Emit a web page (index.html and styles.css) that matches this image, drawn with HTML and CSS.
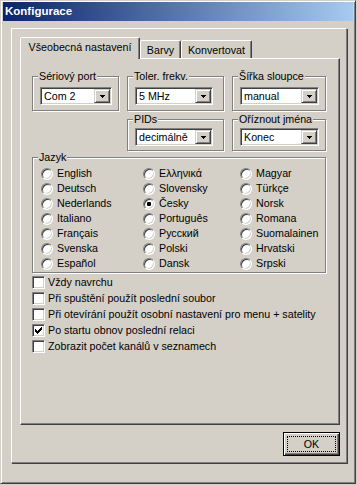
FILE: index.html
```html
<!DOCTYPE html>
<html lang="cs">
<head>
<meta charset="utf-8">
<title>Konfigurace</title>
<link rel="stylesheet" href="styles.css">
</head>
<body>
<div class="window">
  <div class="titlebar">Konfigurace</div>
  <div class="panel">
    <div class="tabs">
      <div class="tab tab-active">Všeobecná nastavení</div>
      <div class="tab tab-barvy">Barvy</div>
      <div class="tab tab-konv">Konvertovat</div>
    </div>
    <div class="page">
      <div class="top-grid">
        <div class="group">
          <span class="legend">Sériový port</span>
          <div class="combo w72"><span class="combo-text">Com 2</span><span class="combo-btn"><svg width="5" height="3" viewBox="0 0 5 3"><path d="M0 0h5v1H0zM1 1h3v1H1zM2 2h1v1H2z"/></svg></span></div>
        </div>
        <div class="group">
          <span class="legend">Toler. frekv.</span>
          <div class="combo w78"><span class="combo-text">5 MHz</span><span class="combo-btn"><svg width="5" height="3" viewBox="0 0 5 3"><path d="M0 0h5v1H0zM1 1h3v1H1zM2 2h1v1H2z"/></svg></span></div>
        </div>
        <div class="group">
          <span class="legend">Šířka sloupce</span>
          <div class="combo w79"><span class="combo-text">manual</span><span class="combo-btn"><svg width="5" height="3" viewBox="0 0 5 3"><path d="M0 0h5v1H0zM1 1h3v1H1zM2 2h1v1H2z"/></svg></span></div>
        </div>
        <div class="group r2 col2">
          <span class="legend">PIDs</span>
          <div class="combo w78"><span class="combo-text">decimálně</span><span class="combo-btn"><svg width="5" height="3" viewBox="0 0 5 3"><path d="M0 0h5v1H0zM1 1h3v1H1zM2 2h1v1H2z"/></svg></span></div>
        </div>
        <div class="group r2 col3">
          <span class="legend">Oříznout jména</span>
          <div class="combo w79"><span class="combo-text">Konec</span><span class="combo-btn"><svg width="5" height="3" viewBox="0 0 5 3"><path d="M0 0h5v1H0zM1 1h3v1H1zM2 2h1v1H2z"/></svg></span></div>
        </div>
      </div>

      <div class="group jazyk">
        <span class="legend">Jazyk</span>
        <div class="radios">
          <div class="radio-item"><span class="radio"></span>English</div>
          <div class="radio-item"><span class="radio"></span>Deutsch</div>
          <div class="radio-item"><span class="radio"></span>Nederlands</div>
          <div class="radio-item"><span class="radio"></span>Italiano</div>
          <div class="radio-item"><span class="radio"></span>Français</div>
          <div class="radio-item"><span class="radio"></span>Svenska</div>
          <div class="radio-item"><span class="radio"></span>Español</div>
          <div class="radio-item"><span class="radio"></span>Ελληνικά</div>
          <div class="radio-item"><span class="radio"></span>Slovensky</div>
          <div class="radio-item"><span class="radio checked"><span class="dot"></span></span>Česky</div>
          <div class="radio-item"><span class="radio"></span>Português</div>
          <div class="radio-item"><span class="radio"></span>Русский</div>
          <div class="radio-item"><span class="radio"></span>Polski</div>
          <div class="radio-item"><span class="radio"></span>Dansk</div>
          <div class="radio-item"><span class="radio"></span>Magyar</div>
          <div class="radio-item"><span class="radio"></span>Türkçe</div>
          <div class="radio-item"><span class="radio"></span>Norsk</div>
          <div class="radio-item"><span class="radio"></span>Romana</div>
          <div class="radio-item"><span class="radio"></span>Suomalainen</div>
          <div class="radio-item"><span class="radio"></span>Hrvatski</div>
          <div class="radio-item"><span class="radio"></span>Srpski</div>
        </div>
      </div>

      <div class="checks">
        <div class="check-item"><span class="checkbox"></span>Vždy navrchu</div>
        <div class="check-item"><span class="checkbox"></span>Při spuštění použít poslední soubor</div>
        <div class="check-item"><span class="checkbox"></span>Při otevírání použít osobní nastavení pro menu + satelity</div>
        <div class="check-item"><span class="checkbox"><svg width="11" height="11" viewBox="0 0 11 11"><path d="M2 4h1v3H2zM3 5h1v3H3zM4 6h1v3H4zM5 5h1v3H5zM6 4h1v3H6zM7 3h1v3H7zM8 2h1v3H8z"/></svg></span>Po startu obnov poslední relaci</div>
        <div class="check-item"><span class="checkbox"></span>Zobrazit počet kanálů v seznamech</div>
      </div>
    </div>
    <div class="buttons">
      <button class="ok" type="button">OK</button>
    </div>
  </div>
</div>
</body>
</html>
```

FILE: styles.css
```css
* { box-sizing: border-box; }

html, body {
  margin: 0;
  padding: 0;
}

body {
  width: 357px;
  height: 485px;
  overflow: hidden;
  background: #D4D0C8;
  font-family: "Liberation Sans", Arial, sans-serif;
  font-size: 10.7px;
  color: #000;
}

.window {
  width: 356px;
  height: 484px;
  border: 1px solid;
  border-color: #D4D0C8 #404040 #404040 #D4D0C8;
  box-shadow: inset 1px 1px #fff, inset -1px -1px #808080;
  padding: 1px 2px 2px 2px;
  display: flex;
  flex-direction: column;
  align-items: flex-start;
}

.titlebar {
  width: 100%;
  height: 19px;
  line-height: 19px;
  padding-left: 2px;
  color: #fff;
  font-weight: bold;
  font-size: 11.5px;
  background: linear-gradient(to right, #0A246A, #A6CAF0);
}

.panel {
  margin: 7px 0 0 8px;
  width: 336px;
  height: 435px;
  border: 1px solid;
  border-color: #fff #808080 #808080 #fff;
  box-shadow: 1px 1px #404040;
  padding: 8px 0 0 8px;
}

.tabs {
  display: flex;
  align-items: flex-end;
  height: 21px;
}

.tab {
  height: 18px;
  border: 1px solid;
  border-bottom: none;
  border-color: #fff #404040 transparent #fff;
  border-radius: 2px 2px 0 0;
  box-shadow: inset -1px 0 #808080;
  padding-top: 3px;
  line-height: 13px;
  text-align: center;
  white-space: nowrap;
  background: #D4D0C8;
}

.tab-active {
  position: relative;
  z-index: 1;
  width: 120px;
  height: 22px;
  margin-bottom: -1px;
}

.tab-barvy { width: 41px; }
.tab-konv { width: 71px; }

.page {
  width: 320px;
  height: 367px;
  border: 1px solid;
  border-color: #fff #404040 #404040 #fff;
  box-shadow: inset -1px -1px #808080;
  padding: 17px 0 0 11px;
}

.top-grid {
  display: grid;
  grid-template-columns: 87px 97px 94px;
  grid-template-rows: 35px 32px;
  gap: 8px;
}

.group {
  position: relative;
  border: 1px solid #808080;
  box-shadow: inset 1px 1px #fff, 1px 1px #fff;
  padding: 10px 0 0 7px;
}

.group.r2 { padding-top: 8px; }
.col2 { grid-column: 2; grid-row: 2; }
.col3 { grid-column: 3; grid-row: 2; }

.legend {
  position: absolute;
  top: -7px;
  left: 5px;
  padding: 0 1px;
  line-height: 13px;
  background: #D4D0C8;
  white-space: nowrap;
}

.combo {
  display: flex;
  height: 18px;
  border: 1px solid;
  border-color: #808080 #fff #fff #808080;
  box-shadow: inset 1px 1px #404040, inset -1px -1px #D4D0C8;
  background: #fff;
  padding: 1px;
}

.w72 { width: 72px; }
.w78 { width: 78px; }
.w79 { width: 79px; }

.combo-text {
  flex: 1;
  padding-left: 2px;
  line-height: 14px;
  white-space: nowrap;
  overflow: hidden;
}

.combo-btn {
  flex: none;
  width: 16px;
  height: 14px;
  background: #D4D0C8;
  border: 1px solid;
  border-color: #D4D0C8 #404040 #404040 #D4D0C8;
  box-shadow: inset 1px 1px #fff, inset -1px -1px #808080;
  display: flex;
  align-items: center;
  justify-content: center;
}

.combo-btn svg { display: block; }

.jazyk {
  margin-top: 6px;
  width: 294px;
  height: 116px;
  padding: 8px 0 0 8px;
}

.radios {
  display: grid;
  grid-template-columns: 102px 97px 1fr;
  grid-template-rows: repeat(7, 15px);
  grid-auto-flow: column;
}

.radio-item {
  display: flex;
  align-items: center;
  gap: 4px;
  white-space: nowrap;
  line-height: 13px;
}

.radio {
  flex: none;
  width: 12px;
  height: 12px;
  border-radius: 50%;
  border: 1px solid;
  border-color: #808080 #fff #fff #808080;
  box-shadow: inset 1px 1px #404040, inset -1px -1px #D4D0C8;
  background: #fff;
  display: flex;
  align-items: center;
  justify-content: center;
}

.dot {
  width: 4px;
  height: 4px;
  border-radius: 1px;
  background: #000;
}

.checks {
  margin-top: 1px;
}

.check-item {
  display: flex;
  align-items: center;
  gap: 3px;
  height: 16px;
  white-space: nowrap;
}

.checkbox {
  flex: none;
  width: 13px;
  height: 13px;
  border: 1px solid;
  border-color: #808080 #fff #fff #808080;
  box-shadow: inset 1px 1px #404040, inset -1px -1px #D4D0C8;
  background: #fff;
}

.checkbox svg { display: block; }

.buttons {
  display: flex;
  justify-content: flex-end;
  width: 320px;
  margin-top: 7px;
}

.ok {
  position: relative;
  width: 57px;
  height: 24px;
  margin: 0;
  padding: 0;
  border: 1px solid #000;
  background: #D4D0C8;
  box-shadow: inset 1px 1px #fff, inset -1px -1px #404040, inset -2px -2px #808080;
  font-family: "Liberation Sans", Arial, sans-serif;
  font-size: 10.7px;
  color: #000;
  -webkit-appearance: none;
  appearance: none;
}

.ok::after {
  content: "";
  position: absolute;
  top: 3px;
  left: 3px;
  right: 3px;
  bottom: 3px;
  border: 1px dotted #000;
}
```
